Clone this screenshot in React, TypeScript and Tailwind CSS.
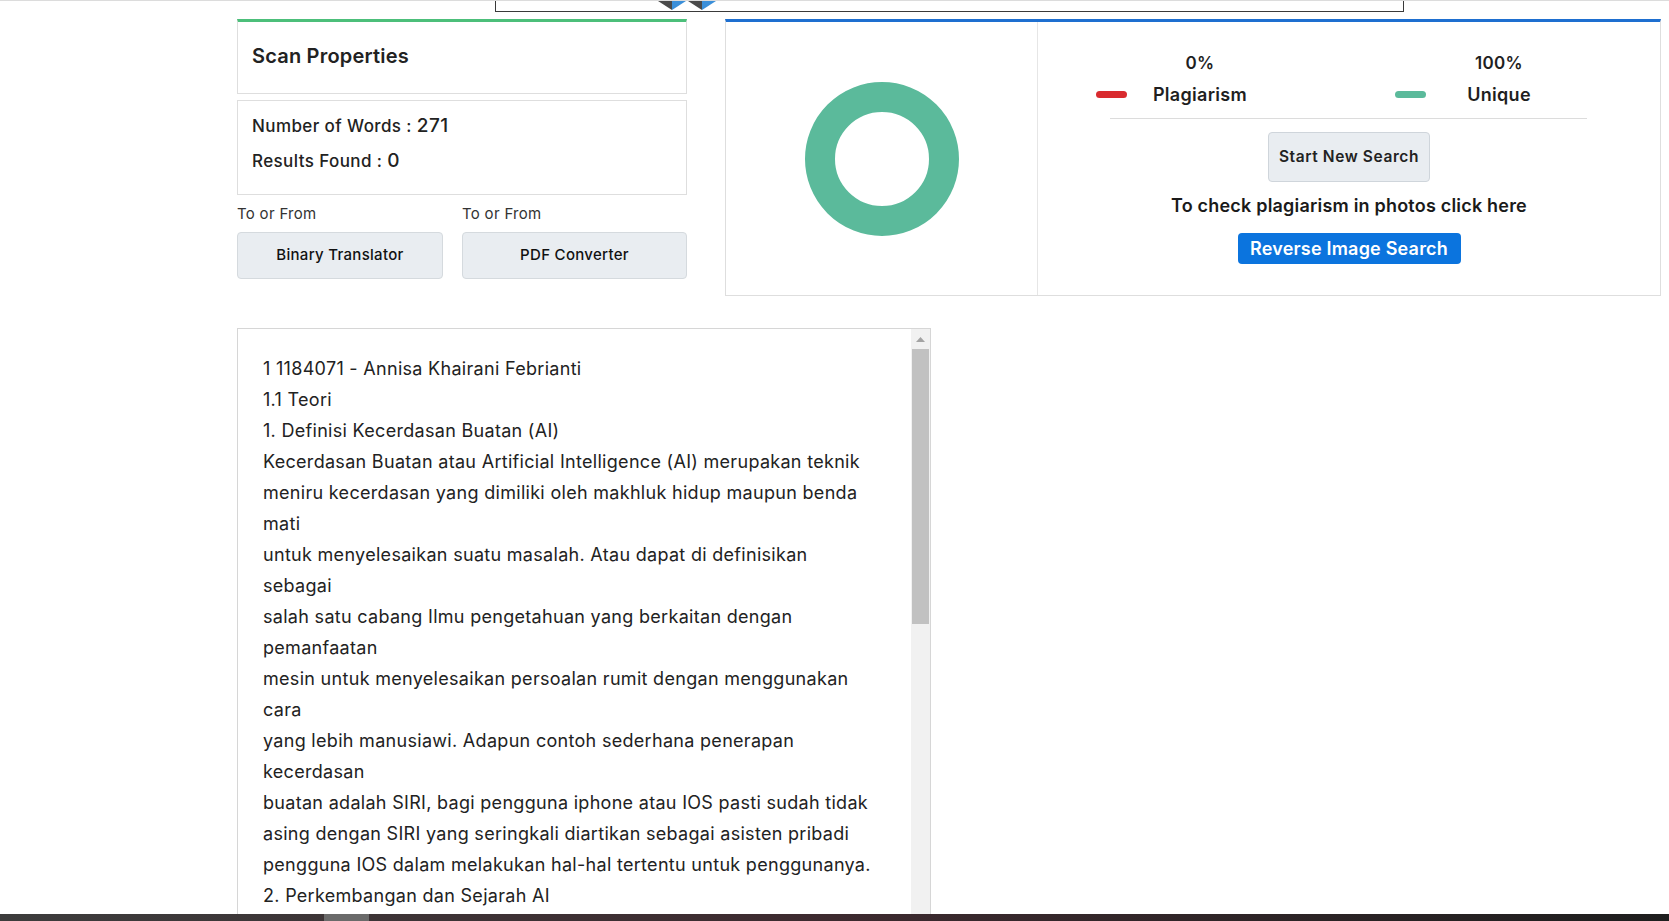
const lines = [
  "1 1184071 - Annisa Khairani Febrianti",
  "1.1 Teori",
  "1. Definisi Kecerdasan Buatan (AI)",
  "Kecerdasan Buatan atau Artificial Intelligence (AI) merupakan teknik",
  "meniru kecerdasan yang dimiliki oleh makhluk hidup maupun benda",
  "mati",
  "untuk menyelesaikan suatu masalah. Atau dapat di definisikan",
  "sebagai",
  "salah satu cabang Ilmu pengetahuan yang berkaitan dengan",
  "pemanfaatan",
  "mesin untuk menyelesaikan persoalan rumit dengan menggunakan",
  "cara",
  "yang lebih manusiawi. Adapun contoh sederhana penerapan",
  "kecerdasan",
  "buatan adalah SIRI, bagi pengguna iphone atau IOS pasti sudah tidak",
  "asing dengan SIRI yang seringkali diartikan sebagai asisten pribadi",
  "pengguna IOS dalam melakukan hal-hal tertentu untuk penggunanya.",
  "2. Perkembangan dan Sejarah AI",
];

const font = { fontFamily: "Inter, 'Noto Sans', sans-serif" };

const Donut = () => (
  <svg width="156" height="156" viewBox="0 0 156 156">
    <circle cx="78" cy="78" r="62" fill="none" stroke="#5bba9b" strokeWidth="30" />
  </svg>
);

const TopBox = () => (
  <div className="ml-[495px] w-[909px] h-[11px] border-x border-b border-[#3a3a3a] pl-[162px]">
    <svg width="60" height="9" viewBox="0 0 60 9">
      <polygon points="0,0 14,0 14,9" fill="#4a4a4a" />
      <polygon points="14,0 28,0 14,9" fill="#3b8fd9" />
      <polygon points="30,0 44,0 44,9" fill="#4a4a4a" />
      <polygon points="44,0 58,0 44,9" fill="#3b8fd9" />
    </svg>
  </div>
);

const Legend = ({ pct, label, color }: { pct: string; label: string; color: string }) => (
  <div className="flex items-end">
    <span className={`mb-[9px] w-[31px] h-[7px] rounded-full ${color}`} />
    <div className="ml-[13px] w-[120px] flex flex-col items-center">
      <span className="text-[17px] font-semibold leading-[22px] tracking-[0.3px]">{pct}</span>
      <span className="mt-[9px] text-[18px] font-semibold leading-[24px] tracking-[0.3px]">{label}</span>
    </div>
  </div>
);

const App = () => {
  return (
    <div className="h-[921px] w-full flex flex-col overflow-hidden bg-white text-[#1f1f1f]" style={font}>
      <div className="flex-1 min-h-0 overflow-hidden border-t border-[#dcdcdc]">
        <TopBox />

        <div className="flex gap-[38px] pl-[237px] mt-[7px]">
          {/* scan properties */}
          <div className="w-[450px] flex flex-col">
            <div className="h-[75px] border border-[#dedede] border-t-[3px] border-t-[#4cbf7a] px-[14px] pb-[4px] flex items-center">
              <h2 className="text-[20px] font-semibold text-[#222] tracking-[0.2px]">Scan Properties</h2>
            </div>
            <div className="mt-[6px] h-[95px] border border-[#dedede] px-[14px] pt-[11px] flex flex-col gap-[7px]">
              <div className="text-[17px] font-medium text-[#222] leading-[28px] tracking-[0.4px]">
                Number of Words : <span className="text-[19px]">271</span>
              </div>
              <div className="text-[17px] font-medium text-[#222] leading-[28px] tracking-[0.4px]">
                Results Found : <span className="text-[19px]">0</span>
              </div>
            </div>
            <div className="grid grid-cols-[206px_225px] gap-x-[19px] mt-[9px]">
              <div className="text-[15px] text-[#333] leading-[20px] tracking-[0.3px]">To or From</div>
              <div className="text-[15px] text-[#333] leading-[20px] tracking-[0.3px]">To or From</div>
              <button className="mt-[8px] h-[47px] rounded-[4px] border border-[#d5dade] bg-[#e9edf1] text-[15px] font-medium text-[#111] tracking-[0.3px]">
                Binary Translator
              </button>
              <button className="mt-[8px] h-[47px] rounded-[4px] border border-[#d5dade] bg-[#e9edf1] text-[15px] font-medium text-[#111] tracking-[0.3px]">
                PDF Converter
              </button>
            </div>
          </div>

          {/* result card */}
          <div className="w-[936px] h-[277px] flex border border-[#dedede] border-t-[3px] border-t-[#1e6fd0]">
            <div className="w-[312px] border-r border-[#e6e6e6] flex items-center justify-center">
              <Donut />
            </div>
            <div className="flex-1 flex flex-col pt-[30px]">
              <div className="flex pl-[58px] gap-[135px]">
                <Legend pct="0%" label="Plagiarism" color="bg-[#d92b2f]" />
                <Legend pct="100%" label="Unique" color="bg-[#5bba9b]" />
              </div>
              <div className="ml-[72px] w-[477px] h-px bg-[#dcdcdc] mt-[11px]" />
              <div className="flex flex-col items-center">
                <button className="mt-[13px] w-[162px] h-[50px] rounded-[4px] border border-[#cfd5db] bg-[#e9edf1] text-[15.5px] font-semibold text-[#222] tracking-[0.6px]">
                  Start New Search
                </button>
                <div className="mt-[12px] text-[18px] font-semibold leading-[24px] text-[#1a1a1a] tracking-[0.2px]">
                  To check plagiarism in photos click here
                </div>
                <button className="mt-[15px] w-[223px] h-[31px] rounded-[4px] bg-[#0b74de] text-white text-[18px] font-semibold leading-none tracking-[0.2px]">
                  Reverse Image Search
                </button>
              </div>
            </div>
          </div>
        </div>

        {/* text area */}
        <div className="ml-[237px] mt-[32px] w-[694px] h-[640px] border border-[#d6d6d6] flex">
          <div className="flex-1 pl-[25px] pt-[24px] overflow-hidden">
            {lines.map((l, i) => (
              <div key={i} className="text-[18px] leading-[31px] text-[#222] whitespace-nowrap tracking-[0.3px]">
                {l}
              </div>
            ))}
          </div>
          <div className="w-[19px] bg-[#f1f1f1] flex flex-col items-center pt-[8px]">
            <svg width="9" height="5" viewBox="0 0 9 5">
              <polygon points="0,5 4.5,0 9,5" fill="#a3a3a3" />
            </svg>
            <div className="mt-[7px] w-[17px] h-[275px] bg-[#c1c1c1]" />
          </div>
        </div>
      </div>

      {/* bottom strip */}
      <div className="h-[7px] shrink-0 flex bg-gradient-to-r from-[#3c3c3c] via-[#3d2a2f] to-[#1e1e1e]">
        <div className="w-[324px]" />
        <div className="w-[45px] bg-[#6a6a6a]" />
      </div>
    </div>
  );
};

export default App;
